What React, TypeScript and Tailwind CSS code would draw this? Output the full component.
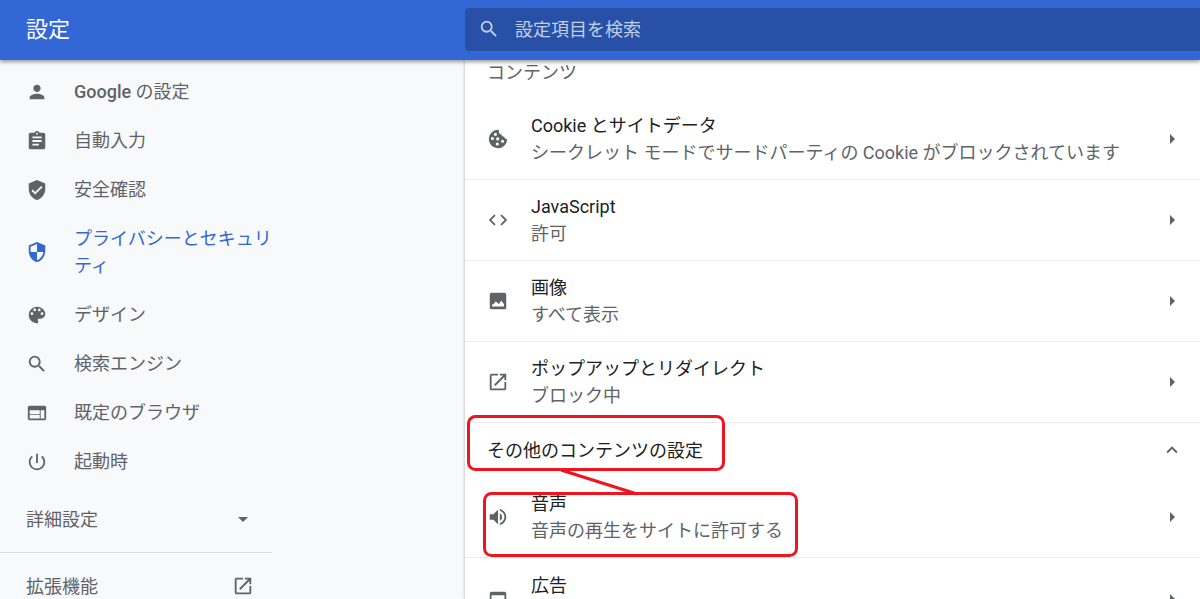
import type { ReactNode } from "react";
import {
  MdArrowDropDown,
  MdArrowRight,
  MdAssignment,
  MdCode,
  MdExpandLess,
  MdLaunch,
  MdPerson,
  MdPowerSettingsNew,
  MdSearch,
  MdSecurity,
  MdVerifiedUser,
  MdVolumeUp,
  MdWeb,
  MdWebAsset,
} from "react-icons/md";

function CookieIcon() {
  return (
    <svg viewBox="0 0 24 24" fill="currentColor" className="size-[22px]">
      <path
        fillRule="evenodd"
        d="M13 2.1A10 10 0 1 0 22 12.2c-1.6.1-2.9-1-3-2.6-1.7.3-3.1-.8-3.1-2.4-2.1 0-3.5-2.3-2.9-5.1zM9.2 5.2a1.7 1.7 0 1 1 0 3.4 1.7 1.7 0 0 1 0-3.4zM5.9 9.8a1.7 1.7 0 1 1 0 3.4 1.7 1.7 0 0 1 0-3.4zM11.7 10.2a1.7 1.7 0 1 1 0 3.4 1.7 1.7 0 0 1 0-3.4zM17 12.7a1.7 1.7 0 1 1 0 3.4 1.7 1.7 0 0 1 0-3.4zM11.2 15.7a1.7 1.7 0 1 1 0 3.4 1.7 1.7 0 0 1 0-3.4z"
      />
    </svg>
  );
}

function ImageIcon() {
  return (
    <svg viewBox="0 0 24 24" fill="currentColor" className="size-[22px]">
      <path
        fillRule="evenodd"
        d="M5 3h14a2 2 0 0 1 2 2v14a2 2 0 0 1-2 2H5a2 2 0 0 1-2-2V5a2 2 0 0 1 2-2zM5.5 18h13v-2.5L15.5 11.5l-2.5 4-1.5-1.5L9.5 12.5 7.5 15l-2 1z"
      />
    </svg>
  );
}

function PaletteIcon() {
  return (
    <svg viewBox="0 0 24 24" fill="currentColor" className="size-[22px]">
      <path
        fillRule="evenodd"
        d="M12 3c-4.97 0-9 4.03-9 9s4.03 9 9 9c.83 0 1.5-.67 1.5-1.5 0-.39-.15-.74-.39-1.01-.23-.26-.38-.61-.38-.99 0-.83.67-1.5 1.5-1.5H16c2.76 0 5-2.24 5-5 0-4.42-4.03-8-9-8zM6.5 9a1.5 1.5 0 1 1 0 3 1.5 1.5 0 0 1 0-3zM9.5 5a1.5 1.5 0 1 1 0 3 1.5 1.5 0 0 1 0-3zM14.5 5a1.5 1.5 0 1 1 0 3 1.5 1.5 0 0 1 0-3zM17.5 9a1.5 1.5 0 1 1 0 3 1.5 1.5 0 0 1 0-3z"
      />
    </svg>
  );
}

type MenuItem = { key: string; label: ReactNode; icon: ReactNode; active?: boolean };

const menuItems: MenuItem[] = [
  {
    key: "google",
    label: (
      <>
        <span className="font-medium">Google</span> の設定
      </>
    ),
    icon: <MdPerson className="size-[22px]" />,
  },
  { key: "autofill", label: "自動入力", icon: <MdAssignment className="size-[22px]" /> },
  { key: "safety", label: "安全確認", icon: <MdVerifiedUser className="size-[22px]" /> },
  {
    key: "privacy",
    label: "プライバシーとセキュリティ",
    icon: <MdSecurity className="size-[22px]" />,
    active: true,
  },
  { key: "design", label: "デザイン", icon: <PaletteIcon /> },
  { key: "search", label: "検索エンジン", icon: <MdSearch className="size-[22px]" /> },
  { key: "browser", label: "既定のブラウザ", icon: <MdWeb className="size-[22px]" /> },
  { key: "startup", label: "起動時", icon: <MdPowerSettingsNew className="size-[22px]" /> },
];

type RowProps = { icon: ReactNode; title: string; detail?: string; last?: boolean };

function Row({ icon, title, detail, last }: RowProps) {
  return (
    <button
      className={`flex h-[81px] w-full items-center pr-4 pl-[22px] text-left ${last ? "" : "border-b border-[#ececec]"}`}
    >
      <span className="w-11 shrink-0 text-[#5f6368]">{icon}</span>
      <span className="min-w-0 flex-1">
        <span className="block text-[#202124]">{title}</span>
        <span className="block min-h-[27px] text-[#5f6368]">{detail}</span>
      </span>
      <MdArrowRight className="size-6 shrink-0 text-[#5f6368]" />
    </button>
  );
}

export default function App() {
  return (
    <div className="flex h-screen flex-col overflow-hidden bg-[#f8f9fa] font-['Roboto','Noto_Sans_CJK_JP',sans-serif] text-[18px] leading-[27px] text-[#5f6368]">
      {/* Toolbar */}
      <header className="relative z-10 flex h-15 shrink-0 items-center bg-[#3367d6] pb-0.5 shadow-[0_2px_4px_rgba(0,0,0,0.4)]">
        <h1 className="w-[465px] shrink-0 pl-[26px] text-[22px] text-white">設定</h1>
        <label className="flex h-[43px] flex-1 items-center rounded-l-sm bg-[#2850a7] pl-[13px] text-[#c2cfea]">
          <MdSearch className="size-[22px] shrink-0" />
          <input
            type="search"
            aria-label="設定項目を検索"
            placeholder="設定項目を検索"
            className="ml-[15px] min-w-0 flex-1 bg-transparent outline-none placeholder:text-[#c2cfea]"
          />
        </label>
      </header>

      <div className="flex min-h-0 flex-1">
        {/* Side menu */}
        <nav className="w-[465px] shrink-0 pt-[7px]">
          <ul className="w-[272px]">
            {menuItems.map(({ key, label, icon, active }) => (
              <li key={key}>
                <a
                  href="#"
                  className={`flex items-center py-[11px] pl-[26px] ${active ? "text-[#3367d6]" : ""}`}
                >
                  <span className="shrink-0">{icon}</span>
                  <span className="ml-[26px]">{label}</span>
                </a>
              </li>
            ))}
          </ul>
          <div className="w-[272px]">
            <button className="flex h-[67px] w-full items-center justify-between border-b border-[#dadce0] pr-[17px] pl-[26px]">
              詳細設定
              <MdArrowDropDown className="size-6" />
            </button>
            <a href="#" className="flex h-[66px] items-center justify-between pr-[18px] pl-[26px]">
              拡張機能
              <MdLaunch className="size-[22px]" />
            </a>
          </div>
        </nav>

        {/* Site settings */}
        <main className="relative min-w-0 flex-1 bg-white shadow-[0_0_3px_rgba(60,64,67,0.4)]">
          <h2 className="h-[39px] pl-[22px] leading-[26px]">コンテンツ</h2>
          <Row
            icon={<CookieIcon />}
            title="Cookie とサイトデータ"
            detail="シークレット モードでサードパーティの Cookie がブロックされています"
          />
          <Row icon={<MdCode className="size-[22px]" />} title="JavaScript" detail="許可" />
          <Row icon={<ImageIcon />} title="画像" detail="すべて表示" />
          <Row
            icon={<MdLaunch className="size-[22px]" />}
            title="ポップアップとリダイレクト"
            detail="ブロック中"
          />
          <button className="flex h-[54px] w-full items-center justify-between pr-[17px] pl-[22px] text-[#202124]">
            その他のコンテンツの設定
            <MdExpandLess className="size-[22px] text-[#5f6368]" />
          </button>
          <Row
            icon={<MdVolumeUp className="size-[22px]" />}
            title="音声"
            detail="音声の再生をサイトに許可する"
          />
          <Row icon={<MdWebAsset className="size-[22px]" />} title="広告" last />

          {/* Red callouts drawn over the list */}
          <svg
            className="pointer-events-none absolute top-[354px] left-0 h-[145px] w-[340px]"
            viewBox="0 0 340 145"
            fill="none"
            stroke="#f0141e"
            strokeWidth="3"
          >
            <rect x="3.5" y="2.5" width="255" height="53" rx="7" />
            <rect x="19.5" y="79.5" width="312" height="62" rx="7" />
            <path d="M96 56l76 24" />
          </svg>
        </main>
      </div>
    </div>
  );
}
